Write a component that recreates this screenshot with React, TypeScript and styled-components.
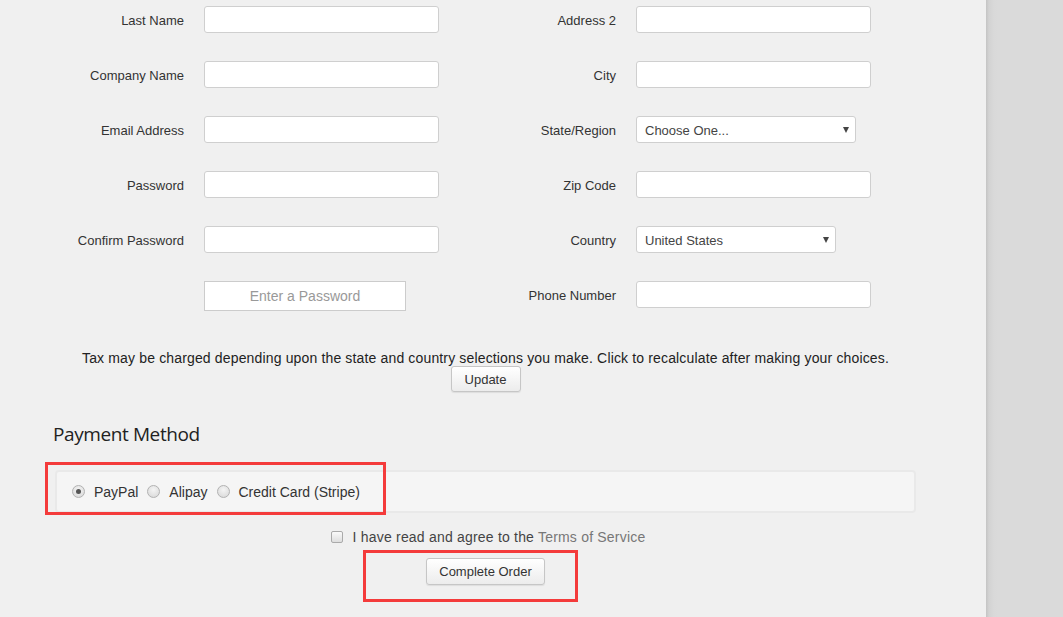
import React from 'react';
import styled, { createGlobalStyle } from 'styled-components';

const GlobalStyle = createGlobalStyle`
  html, body {
    margin: 0;
    padding: 0;
    background: #dadada;
  }
  body {
    font-family: "Liberation Sans", Arial, sans-serif;
    font-size: 13px;
    color: #333;
  }
`;

const leftFields = [
  { label: 'Last Name' },
  { label: 'Company Name' },
  { label: 'Email Address' },
  { label: 'Password' },
  { label: 'Confirm Password' },
];

export default function App() {
  return (
    <>
      <GlobalStyle />
      <Page>
        <Panel>
          <FormGrid>
            <Column>
              {leftFields.map((f) => (
                <Field key={f.label} $labelWidth={184}>
                  <Label>{f.label}</Label>
                  <TextInput $width={235} />
                </Field>
              ))}
              <Field $labelWidth={184}>
                <span />
                <PasswordHint>Enter a Password</PasswordHint>
              </Field>
            </Column>

            <Column>
              <Field $labelWidth={146}>
                <Label>Address 2</Label>
                <TextInput $width={235} />
              </Field>
              <Field $labelWidth={146}>
                <Label>City</Label>
                <TextInput $width={235} />
              </Field>
              <Field $labelWidth={146}>
                <Label>State/Region</Label>
                <Select $width={220}>
                  <span>Choose One...</span>
                  <Caret />
                </Select>
              </Field>
              <Field $labelWidth={146}>
                <Label>Zip Code</Label>
                <TextInput $width={235} />
              </Field>
              <Field $labelWidth={146}>
                <Label>Country</Label>
                <Select $width={200}>
                  <span>United States</span>
                  <Caret />
                </Select>
              </Field>
              <Field $labelWidth={146}>
                <Label>Phone Number</Label>
                <TextInput $width={235} />
              </Field>
            </Column>
          </FormGrid>

          <Content>
            <TaxNote>
              Tax may be charged depending upon the state and country selections you make. Click to
              recalculate after making your choices.
            </TaxNote>
            <Centered>
              <Button $width={70} $height={26}>Update</Button>
            </Centered>

            <Heading>Payment Method</Heading>

            <PaymentBox>
              <Annotation style={{ left: -12, top: -10, width: 341, height: 53 }} />
              <RadioOption>
                <Radio $checked />
                <span>PayPal</span>
              </RadioOption>
              <RadioOption>
                <Radio />
                <span>Alipay</span>
              </RadioOption>
              <RadioOption>
                <Radio />
                <span>Credit Card (Stripe)</span>
              </RadioOption>
            </PaymentBox>

            <AgreeRow>
              <Checkbox />
              <span>
                I have read and agree to the <TermsLink>Terms of Service</TermsLink>
              </span>
            </AgreeRow>

            <Centered>
              <ButtonWrap>
                <Annotation style={{ left: -63, top: -8, width: 215, height: 52 }} />
                <Button $width={119} $height={27}>Complete Order</Button>
              </ButtonWrap>
            </Centered>
          </Content>
        </Panel>
        <Gutter />
      </Page>
    </>
  );
}

const Page = styled.div`
  display: flex;
  min-height: 617px;
  overflow: hidden;
`;

const Panel = styled.div`
  width: 986px;
  flex-shrink: 0;
  background: #f0f0f0;
  padding-top: 6px;
  padding-bottom: 40px;
`;

const Gutter = styled.div`
  flex: 1;
  background: linear-gradient(to right, #c4c4c4 0, #d3d3d3 3px, #d9d9d9 8px, #dadada 12px);
`;

const FormGrid = styled.div`
  display: grid;
  grid-template-columns: 439px 1fr;
  column-gap: 31px;
`;

const Column = styled.div`
  display: flex;
  flex-direction: column;
  gap: 28px;
`;

const Field = styled.div<{ $labelWidth: number }>`
  display: grid;
  grid-template-columns: ${(p) => p.$labelWidth}px auto;
  column-gap: 20px;
  align-items: center;
  justify-items: start;
  min-height: 27px;
`;

const Label = styled.label`
  justify-self: end;
  color: #333;
  font-size: 13px;
  white-space: nowrap;
  padding-top: 1px;
`;

const TextInput = styled.input`
  box-sizing: border-box;
  width: ${(p: { $width: number }) => p.$width}px;
  height: 27px;
  border: 1px solid #cfcfcf;
  border-radius: 3px;
  background: #fff;
  padding: 0 8px;
  font: inherit;
  outline: none;
`;

const Select = styled.div<{ $width: number }>`
  box-sizing: border-box;
  width: ${(p) => p.$width}px;
  height: 27px;
  border: 1px solid #cfcfcf;
  border-radius: 3px;
  background: #fff;
  padding: 1px 6px 0 8px;
  display: flex;
  align-items: center;
  justify-content: space-between;
  color: #444;
  font-size: 13px;
`;

const Caret = styled.span`
  width: 0;
  height: 0;
  border-left: 3.5px solid transparent;
  border-right: 3.5px solid transparent;
  border-top: 6px solid #444;
`;

const PasswordHint = styled.div`
  box-sizing: border-box;
  width: 202px;
  height: 30px;
  border: 1px solid #cccccc;
  background: #fff;
  color: #999;
  font-size: 14px;
  display: flex;
  align-items: center;
  justify-content: center;
`;

const Content = styled.div`
  width: 861px;
  margin-left: 55px;
  display: flex;
  flex-direction: column;
`;

const TaxNote = styled.p`
  margin: 39px -60px 0;
  text-align: center;
  font-size: 14px;
  letter-spacing: 0.15px;
  line-height: 16px;
  color: #222;
`;

const Centered = styled.div`
  display: flex;
  justify-content: center;
`;

const Button = styled.button<{ $width: number; $height: number }>`
  box-sizing: border-box;
  width: ${(p) => p.$width}px;
  height: ${(p) => p.$height}px;
  border: 1px solid #c6c6c6;
  border-radius: 3px;
  background: linear-gradient(#ffffff, #ececec);
  box-shadow: 0 1px 1px rgba(0, 0, 0, 0.08);
  font-family: "Liberation Sans", Arial, sans-serif;
  font-size: 13px;
  color: #333;
  padding: 0;
`;

const Heading = styled.h3`
  margin: 28px 0 0 -2px;
  font-family: "Open Sans", "Noto Sans", sans-serif;
  font-weight: 400;
  font-size: 19px;
  line-height: 28px;
  color: #222;
  letter-spacing: -0.4px;
`;

const PaymentBox = styled.div`
  position: relative;
  box-sizing: border-box;
  margin-top: 22px;
  height: 43px;
  border: 2px solid #e9e9e9;
  border-radius: 4px;
  background: #f5f5f5;
  display: flex;
  align-items: center;
  padding-left: 15px;
  gap: 9px;
`;

const Annotation = styled.div`
  position: absolute;
  box-sizing: border-box;
  border: 3px solid #f43b3b;
  pointer-events: none;
`;

const RadioOption = styled.label`
  display: flex;
  align-items: center;
  gap: 9px;
  font-size: 14px;
  color: #333;
`;

const Radio = styled.span<{ $checked?: boolean }>`
  box-sizing: border-box;
  width: 13px;
  height: 13px;
  border-radius: 50%;
  border: 1px solid #b2b2b2;
  background: radial-gradient(circle at 50% 35%, #f4f4f4, #d6d6d6);
  position: relative;

  &::after {
    content: '';
    display: ${(p) => (p.$checked ? 'block' : 'none')};
    position: absolute;
    left: 3px;
    top: 3px;
    width: 5px;
    height: 5px;
    border-radius: 50%;
    background: #555;
  }
`;

const AgreeRow = styled.div`
  margin-top: 15px;
  display: flex;
  justify-content: center;
  align-items: center;
  gap: 10px;
  line-height: 18px;
  font-size: 14px;
  letter-spacing: 0.2px;
  color: #444;
  padding-left: 5px;
`;

const Checkbox = styled.span`
  box-sizing: border-box;
  width: 12px;
  height: 12px;
  border: 1px solid #aaa;
  border-radius: 2px;
  background: linear-gradient(#fafafa, #dedede);
`;

const TermsLink = styled.a`
  color: #777;
  text-decoration: none;
`;

const ButtonWrap = styled.div`
  position: relative;
  margin-top: 12px;
  display: flex;
`;
